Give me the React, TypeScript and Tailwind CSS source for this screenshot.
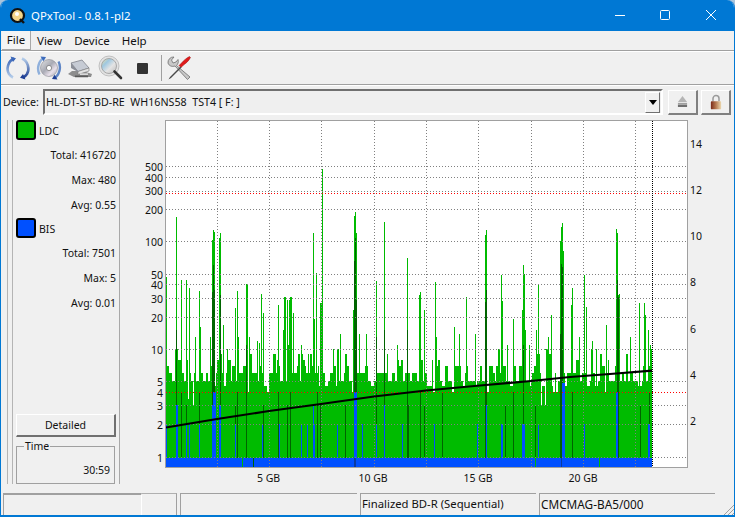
import { useMemo } from 'react'

const FONT = "font-['Noto_Sans',sans-serif]"

// chart colours
const GREEN = '#00bb00'
const DARK = '#006400'
const BLUE = '#0050ff'

const yGrid = [457.5, 424.5, 405.5, 392.5, 381.5, 349.5, 317.5, 298.5, 284.5, 274.5, 241.5, 209.5, 191.5, 177.5, 166.5]
const yLabels: [string, number][] = [
  ['1', 458], ['2', 425], ['3', 406], ['4', 393], ['5', 382], ['10', 350], ['20', 318], ['30', 299], ['40', 285],
  ['50', 275], ['100', 242], ['200', 210], ['300', 191], ['400', 178], ['500', 167],
]
const rightLabels: [string, number][] = [['14', 144], ['12', 190], ['10', 236], ['8', 282], ['6', 329], ['4', 375], ['2', 421]]
const xGrid = [217, 269, 321, 374, 426, 478, 531, 583, 635]

// [x, top y] of the tall peaks, read off the picture
const peaks: [number, number][] = [
  [166, 277], [176, 217], [181, 280], [186, 280], [189, 288], [195, 337], [199, 291], [200, 327], [210, 337], [212, 240],
  [213, 230], [214, 232], [219, 238], [220, 233], [223, 325], [227, 349], [235, 308], [237, 291], [238, 337], [246, 284],
  [247, 284], [249, 337], [257, 341], [261, 354], [259, 343], [261, 294], [263, 313], [278, 305], [277, 360], [283, 330],
  [284, 297], [285, 297], [287, 300], [288, 345], [289, 300], [290, 297], [291, 297], [293, 313], [301, 345], [308, 354],
  [313, 233], [314, 319], [316, 273], [320, 303], [321, 303], [322, 169], [333, 349],
  [340, 334], [353, 310], [354, 216], [355, 212], [356, 233], [359, 334], [366, 334], [376, 281], [384, 222], [397, 345],
  [407, 258], [419, 295], [420, 292], [424, 310], [435, 282], [436, 337], [454, 327], [459, 334], [466, 297], [475, 334],
  [485, 235], [486, 230], [501, 275], [502, 301], [507, 345],
  [513, 319], [522, 310], [523, 265], [524, 274], [525, 330], [529, 345], [536, 330], [538, 284], [541, 349], [548, 337],
  [551, 315], [560, 241], [561, 227], [562, 223], [563, 251], [571, 305], [572, 288], [579, 337], [584, 275], [586, 307],
  [592, 341], [596, 349], [606, 337], [606, 325], [616, 229], [617, 233], [618, 295], [619, 294], [630, 337], [639, 303],
  [644, 303], [645, 315], [648, 330], [650, 345], [651, 349],
]

// dark strokes that run over a peak: [x, top y]
const darkTall: [number, number][] = [
  [212, 292], [213, 265], [214, 290], [220, 295], [354, 261], [355, 238], [356, 300], [376, 337], [384, 330], [407, 330],
  [485, 302], [486, 290], [523, 345], [560, 334], [561, 264], [562, 267], [617, 280], [618, 297], [246, 345], [176, 330],
]
const darkLow = [
  181, 186, 199, 235, 237, 263, 278, 287, 290, 320, 317, 345, 376, 408, 420, 424, 442, 505, 513, 535, 572, 640, 649,
]

// blue strokes that rise from the bottom band: [x, width, top y]
const blues: [number, number, number][] = [
  [166, 1, 424], [176, 2, 405], [186, 1, 424], [189, 1, 424], [199, 1, 424], [212, 1, 405], [213, 3, 392], [219, 2, 405],
  [235, 1, 424], [262, 1, 424], [301, 1, 424], [314, 1, 424], [337, 1, 424], [354, 3, 392], [362, 1, 424], [376, 1, 424],
  [384, 1, 405], [402, 1, 424], [434, 1, 424], [477, 1, 424], [486, 1, 405], [501, 2, 424], [522, 3, 424], [538, 1, 424],
  [562, 3, 383], [584, 1, 424], [616, 2, 392], [648, 2, 424], [307, 1, 424], [313, 1, 405], [279, 1, 424],
]
const whiteGaps: [number, number][] = [[193, 405], [188, 399], [541, 405], [545, 405], [224, 386], [530, 386], [605, 392]]

function seeded(seed: number) {
  let s = seed
  return () => {
    s = (s * 16807) % 2147483647
    return s / 2147483647
  }
}

function QpxChart() {
  const skyline = useMemo(() => {
    const rand = seeded(4711)
    const out: string[] = []
    let x = 166
    while (x < 652) {
      const w = Math.min(1 + Math.floor(rand() * 3), 652 - x)
      const r = rand()
      let top = 381
      if (r > 0.35) top = 373
      if (r > 0.65) top = 366
      if (r > 0.84) top = 360
      if (r > 0.92) top = 354
      if (r > 0.97) top = 349
      if (r < 0.1) top = 386
      if (r < 0.04) top = 392
      out.push(`M${x} ${top}h${w}V458h-${w}z`)
      x += w
    }
    return out.join('')
  }, [])

  const peakPath = peaks.map(([x, y]) => `M${x} ${y}h1V458h-1z`).join('')
  const darkPath =
    darkTall.map(([x, y]) => `M${x} ${y}h1V458h-1z`).join('') +
    darkLow.map((x, i) => `M${x} ${i % 2 === 0 ? 392 : 405}h1V458h-1z`).join('')
  const bluePath = blues.map(([x, w, y]) => `M${x} ${y}h${w}V458h-${w}z`).join('')
  const gapPath = whiteGaps.map(([x, y]) => `M${x} 350h1V${y}h-1z`).join('')

  return (
    <svg viewBox="120 120 615 367" className="w-[615px] h-[367px] block shrink-0" fontFamily="'Noto Sans',sans-serif" fontSize="10.5">
      <rect x="166" y="121" width="521" height="346" fill="#fff" />
      <g shapeRendering="crispEdges">
        <path d={skyline} fill={GREEN} />
        <path d={peakPath} fill={GREEN} />
        <rect x="166" y="392" width="486" height="66" fill={GREEN} />
        <path d={gapPath} fill="#fff" />
        <path d={darkPath} fill={DARK} />
        <path d={bluePath} fill={BLUE} />
        <rect x="166" y="458" width="486" height="9" fill={BLUE} />
        <rect x="242" y="458" width="1" height="9" fill={GREEN} />
        <rect x="253" y="458" width="1" height="9" fill={DARK} />
        <rect x="354" y="458" width="2" height="9" fill="#0a3aa0" />
        <rect x="561" y="458" width="1" height="9" fill="#0a3aa0" />
        <rect x="535" y="458" width="1" height="9" fill={GREEN} />
        <rect x="599" y="458" width="1" height="9" fill={GREEN} />
      </g>
      <g stroke="#808080" strokeWidth="1" strokeDasharray="1 2" shapeRendering="crispEdges">
        {yGrid.map((y) => (
          <line key={y} x1="166" x2="687" y1={y} y2={y} />
        ))}
        {xGrid.map((x) => (
          <line key={x} x1={x + 0.5} x2={x + 0.5} y1="121" y2="467" />
        ))}
      </g>
      <g stroke="#ff0000" strokeWidth="1" strokeDasharray="1 2" shapeRendering="crispEdges">
        <line x1="166" x2="687" y1="392.5" y2="392.5" />
        <line x1="166" x2="687" y1="193.5" y2="193.5" />
      </g>
      <line x1="652.5" x2="652.5" y1="121" y2="467" stroke="#000" strokeDasharray="1 1" shapeRendering="crispEdges" />
      <polyline
        points="166,427.5 217,419 269,411 321,404 374,396.5 426,390.5 480,385.5 531,381 570,377 610,374 652,370.7"
        fill="none"
        stroke="#000"
        strokeWidth="2.2"
      />
      <rect x="165.5" y="120.5" width="522" height="347" fill="none" stroke="#a0a0a0" shapeRendering="crispEdges" />
      <g fill="#111" textAnchor="end">
        {yLabels.map(([t, y]) => (
          <text key={t} x="163" y={y + 4}>
            {t}
          </text>
        ))}
      </g>
      <g fill="#111">
        {rightLabels.map(([t, y]) => (
          <text key={t} x="690" y={y + 4}>
            {t}
          </text>
        ))}
      </g>
      <g fill="#111" textAnchor="middle">
        <text x="268.5" y="482">5 GB</text>
        <text x="373" y="482">10 GB</text>
        <text x="478" y="482">15 GB</text>
        <text x="583" y="482">20 GB</text>
      </g>
    </svg>
  )
}

function AppIcon() {
  return (
    <svg viewBox="0 0 18 18" className="w-[18px] h-[18px]">
      <circle cx="8.5" cy="8.5" r="6.5" fill="#f4d58a" stroke="#111" strokeWidth="2.2" />
      <circle cx="8" cy="7" r="2" fill="#fff" />
      <path d="M11 12l4 4" stroke="#111" strokeWidth="2.4" />
    </svg>
  )
}

function RefreshIcon() {
  return (
    <svg viewBox="0 0 26 26" className="w-[26px] h-[26px]">
      <defs>
        <linearGradient id="rl" x1="0" x2="0" y1="0" y2="1">
          <stop offset="0" stopColor="#3a66b8" />
          <stop offset="1" stopColor="#b4cdea" />
        </linearGradient>
        <linearGradient id="rr" x1="0" x2="0" y1="0" y2="1">
          <stop offset="0" stopColor="#b4cdea" />
          <stop offset="1" stopColor="#1f3f94" />
        </linearGradient>
      </defs>
      <path d="M9 3.5C3 6 1 14 4 19c1 1.5 2.5 2.8 4 3.5" fill="none" stroke="url(#rl)" strokeWidth="2.6" />
      <path d="M5.5 1.5L11 3.2 8 7z" fill="#3a66b8" />
      <path d="M17 3.5c6 2.500 8 10.500 5 15.500-1 1.500-2.500 2.800-4 3.500" fill="none" stroke="url(#rr)" strokeWidth="2.6" />
      <path d="M20.500 24.500L15 22.800 18 19z" fill="#1f3f94" />
    </svg>
  )
}

function DiscRefreshIcon() {
  return (
    <svg viewBox="0 0 26 26" className="w-[26px] h-[26px]">
      <defs>
        <linearGradient id="dsc" x1="0" x2="1" y1="0" y2="1">
          <stop offset="0" stopColor="#e6e6e6" />
          <stop offset="0.45" stopColor="#a8aab4" />
          <stop offset="0.7" stopColor="#e8e0ea" />
          <stop offset="1" stopColor="#9aa0aa" />
        </linearGradient>
      </defs>
      <circle cx="13" cy="13" r="8.500" fill="url(#dsc)" stroke="#8a8a92" strokeWidth="0.6" />
      <circle cx="13" cy="13" r="2.600" fill="#fff" stroke="#777" strokeWidth="0.8" />
      <path d="M8 2.800C2.500 5.500.5 14 3.500 19.500" fill="none" stroke="#8fb0dc" strokeWidth="2.400" />
      <path d="M4.500 1.500L10 2l-2.500 4.200z" fill="#3e6cbc" />
      <path d="M18 23.200c5.500-2.700 7.500-11.200 4.500-16.700" fill="none" stroke="#5f86c6" strokeWidth="2.400" />
      <path d="M21.500 24.500L16 24l2.500-4.200z" fill="#1f3f94" />
    </svg>
  )
}

function DriveIcon() {
  return (
    <svg viewBox="0 0 26 26" className="w-[26px] h-[26px]">
      <path d="M1 19l6 3h17l1-3-9-3H5z" fill="#8d8d8d" />
      <path d="M4 8l11-3 7 8-11 3.500z" fill="#c6cbd4" stroke="#7f838c" strokeWidth="0.8" />
      <path d="M4 8v5l7 4v-1z" fill="#8b8f98" />
      <path d="M11 16.500l11-3.500v3l-11 3.500z" fill="#e3e3e3" stroke="#777" strokeWidth="0.6" />
      <path d="M8 20.500h13v1.800H8z" fill="#5a5a5a" />
      <path d="M13 18.500h8v1.200h-8z" fill="#f5f5f5" />
    </svg>
  )
}

function ScanIcon() {
  return (
    <svg viewBox="0 0 26 26" className="w-[26px] h-[26px]">
      <defs>
        <linearGradient id="scn" x1="0" x2="1" y1="0" y2="1">
          <stop offset="0" stopColor="#f2e3a0" />
          <stop offset="0.3" stopColor="#9fc8e0" />
          <stop offset="0.6" stopColor="#e4e4e4" />
          <stop offset="1" stopColor="#bcbcbc" />
        </linearGradient>
      </defs>
      <circle cx="11" cy="11" r="10" fill="#e2e2e2" stroke="#b5b5b5" strokeWidth="0.8" />
      <circle cx="11" cy="11" r="7.500" fill="url(#scn)" stroke="#9a9a9a" strokeWidth="0.8" />
      <path d="M16.500 16.500l6.500 6.500" stroke="#333" strokeWidth="2.600" strokeLinecap="round" />
    </svg>
  )
}

function ToolsIcon() {
  return (
    <svg viewBox="0 0 26 26" className="w-[26px] h-[26px]">
      <path d="M2 8a5.500 5.500 0 0 1 6-6L5.500 5l1.500 3 3-1 2-2.500c.7 2.300.2 4.500-1.500 6L24 22l-2.500 2.500L9 11C6 12 3 11 2 8z" fill="#c8c8c8" stroke="#6e6e6e" strokeWidth="0.8" />
      <path d="M24.500 2.500l-1-1c-3 1.500-6 4-8 6.500L13 10.500l2 2 2.500-2.500c3-2 5.500-4.500 7-7.500z" fill="#e01a1a" stroke="#9a0f0f" strokeWidth="0.5" />
      <path d="M14.500 11.500L4 22l-1.500 2.500L5 23l10.500-10.500z" fill="#4a4a4a" />
    </svg>
  )
}

function EjectIcon() {
  return (
    <svg viewBox="0 0 12 14" className="w-[11px] h-[13px]">
      <path d="M6 1l5 6.500H1z" fill="#b5b5b5" />
      <rect x="1" y="8.500" width="10" height="1.800" fill="#a0a0a0" />
      <rect x="1" y="10.500" width="10" height="2.500" fill="#6f6f6f" />
    </svg>
  )
}

function LockIcon() {
  return (
    <svg viewBox="0 0 14 18" className="w-[12px] h-[16px]">
      <defs>
        <linearGradient id="lk" x1="0" x2="1" y1="0" y2="0">
          <stop offset="0" stopColor="#7a2a18" />
          <stop offset="0.5" stopColor="#b77b52" />
          <stop offset="1" stopColor="#ecd9b0" />
        </linearGradient>
      </defs>
      <path d="M3.500 8V5a3.500 3.500 0 0 1 7 0v3" fill="none" stroke="#9b9b9b" strokeWidth="1.800" />
      <rect x="1" y="8" width="12" height="9.500" rx="1" fill="url(#lk)" />
    </svg>
  )
}

function CaptionButtons() {
  return (
    <div className="flex items-center h-full">
      <svg viewBox="0 0 46 31" className="w-[46px] h-[31px]">
        <path d="M18 15.500h10" stroke="#fff" strokeWidth="1" />
      </svg>
      <svg viewBox="0 0 46 31" className="w-[46px] h-[31px]">
        <rect x="17.500" y="10.500" width="9" height="9" rx="1" fill="none" stroke="#fff" />
      </svg>
      <svg viewBox="0 0 46 31" className="w-[46px] h-[31px]">
        <path d="M17 10l10 10M27 10l-10 10" stroke="#fff" strokeWidth="1" />
      </svg>
    </div>
  )
}

function Stat({ label }: { label: string }) {
  return <div className="h-[25px] pt-[2px] flex items-center justify-end pr-[3px] text-[10.5px] text-[#111]">{label}</div>
}

function Legend({ name, color }: { name: string; color: string }) {
  return (
    <div className="h-[22px] flex items-start gap-[3px] pl-[3px] text-[10.5px] leading-[22px] text-[#111]">
      <div className={`w-[20px] h-[20px] rounded-[3px] border-2 border-black ${color}`} />
      {name}
    </div>
  )
}

export default function App() {
  return (
    <div className={`w-[735px] h-[517px] overflow-hidden bg-[#a9c4dc] ${FONT}`}>
      <div className="w-full h-full flex flex-col bg-[#f0f0f0] rounded-t-[8px] overflow-hidden border-x border-b-[2px] border-[#0078d4]">
        {/* title bar */}
        <div className="h-[31px] shrink-0 -mx-px bg-[#0078d4] flex items-center justify-between text-white">
          <div className="flex items-center gap-[4px] pl-[9px] text-[11.4px]">
            <AppIcon />
            <span>QPxTool - 0.8.1-pl2</span>
          </div>
          <CaptionButtons />
        </div>

        {/* menu */}
        <div className="h-[20px] shrink-0 flex items-center pl-px border-b border-[#a0a0a0] text-[11.5px] text-[#111]">
          <span className="w-[29px] h-[19px] flex items-center justify-center border-r border-b border-[#a8a8a8] bg-[#f4f4f4]">File</span>
          <span className="ml-[6px]">View</span>
          <span className="ml-[12px]">Device</span>
          <span className="ml-[12px]">Help</span>
        </div>

        {/* toolbar */}
        <div className="h-[34px] shrink-0 flex items-center pl-[4px] gap-[5px] border-t border-t-white border-b border-b-[#a0a0a0]">
          <RefreshIcon />
          <DiscRefreshIcon />
          <DriveIcon />
          <ScanIcon />
          <div className="w-[26px] flex justify-center">
            <div className="w-[11px] h-[11px] bg-[#333] rounded-[1px]" />
          </div>
          <div className="w-px h-[26px] bg-[#a0a0a0] ml-px -mr-px" />
          <ToolsIcon />
        </div>

        {/* device row */}
        <div className="h-[33px] shrink-0 flex items-center pl-[2px] pr-[3px] border-t border-white text-[10.7px] text-[#111]">
          <span className="w-[40px] shrink-0">Device:</span>
          <div className="flex-1 h-[26px] flex items-center border-2 border-[#707070] border-r-white border-b-white pl-[1px] pr-px bg-[#efefef]">
            <span className="flex-1 whitespace-pre">HL-DT-ST BD-RE  WH16NS58  TST4 [ F: ]</span>
            <div className="w-[15px] h-[21px] flex items-center justify-center bg-[#f0f0f0] border border-white border-r-[#707070] border-b-[#707070]">
              <div className="w-0 h-0 border-x-[4px] border-x-transparent border-t-[5px] border-t-black" />
            </div>
          </div>
          <div className="ml-[5px] w-[30px] h-[25px] flex items-center justify-center border border-white border-r-2 border-b-2 border-r-[#808080] border-b-[#808080]">
            <EjectIcon />
          </div>
          <div className="ml-[3px] w-[30px] h-[25px] flex items-center justify-center border border-white border-r-2 border-b-2 border-r-[#808080] border-b-[#808080]">
            <LockIcon />
          </div>
        </div>

        {/* main */}
        <div className="h-[367px] mt-[2px] shrink-0 flex">
          <div className="w-[6px] shrink-0" />
          <div className="w-[6px] shrink-0 border-x border-[#b4b4b4] mb-[3px]" />
          <div className="w-[107px] shrink-0 flex flex-col mb-[3px] border-r border-[#a8a8a8]">
            <Legend name="LDC" color="bg-[#00b800]" />
            <Stat label="Total: 416720" />
            <Stat label="Max: 480" />
            <Stat label="Avg: 0.55" />
            <div className="h-px" />
            <Legend name="BIS" color="bg-[#0050ff]" />
            <Stat label="Total: 7501" />
            <Stat label="Max: 5" />
            <Stat label="Avg: 0.01" />
            <div className="flex-1" />
            <div className="ml-[3px] mr-[3px] h-[23px] pt-px flex items-center justify-center text-[10.5px] text-[#111] border border-white border-r-2 border-b-2 border-r-[#707070] border-b-[#707070]">
              Detailed
            </div>
            <div className="relative ml-[3px] mr-[4px] mt-[9px] h-[38px] border border-[#a0a0a0] flex items-end justify-end pr-[4px] pb-[4px] text-[10.5px] text-[#111]">
              <span className="absolute left-[7px] -top-[8px] px-px bg-[#f0f0f0]">Time</span>
              30:59
            </div>
          </div>
          <QpxChart />
        </div>

        {/* status bar */}
        <div className="flex-1 flex items-stretch pt-[6px] pl-[2px] text-[#111]">
          <div className="w-[174px] flex">
            <div className="w-[139px] border-t-2 border-t-[#a0a0a0] border-l border-l-[#a0a0a0] border-r border-r-white" />
            <div className="flex-1 border-t border-[#b0b0b0] border-r border-r-[#a0a0a0]" />
          </div>
          <div className="w-[177px] ml-[3px] border-t border-l border-[#a0a0a0]" />
          <div className="w-[176px] ml-[3px] border-t border-l border-[#a0a0a0] flex items-center pl-px text-[11.3px]">Finalized BD-R (Sequential)</div>
          <div className="w-[176px] ml-[3px] border-t border-l border-[#a0a0a0] flex items-center pl-px text-[11.8px]">CMCMAG-BA5/000</div>
          <div className="relative flex-1">
            <svg viewBox="0 0 12 12" className="absolute right-0 bottom-0 w-[12px] h-[12px]">
              <path d="M12 2L2 12M12 6l-6 6M12 10l-2 2" stroke="#a0a0a0" strokeWidth="1" />
            </svg>
          </div>
        </div>
      </div>
    </div>
  )
}
